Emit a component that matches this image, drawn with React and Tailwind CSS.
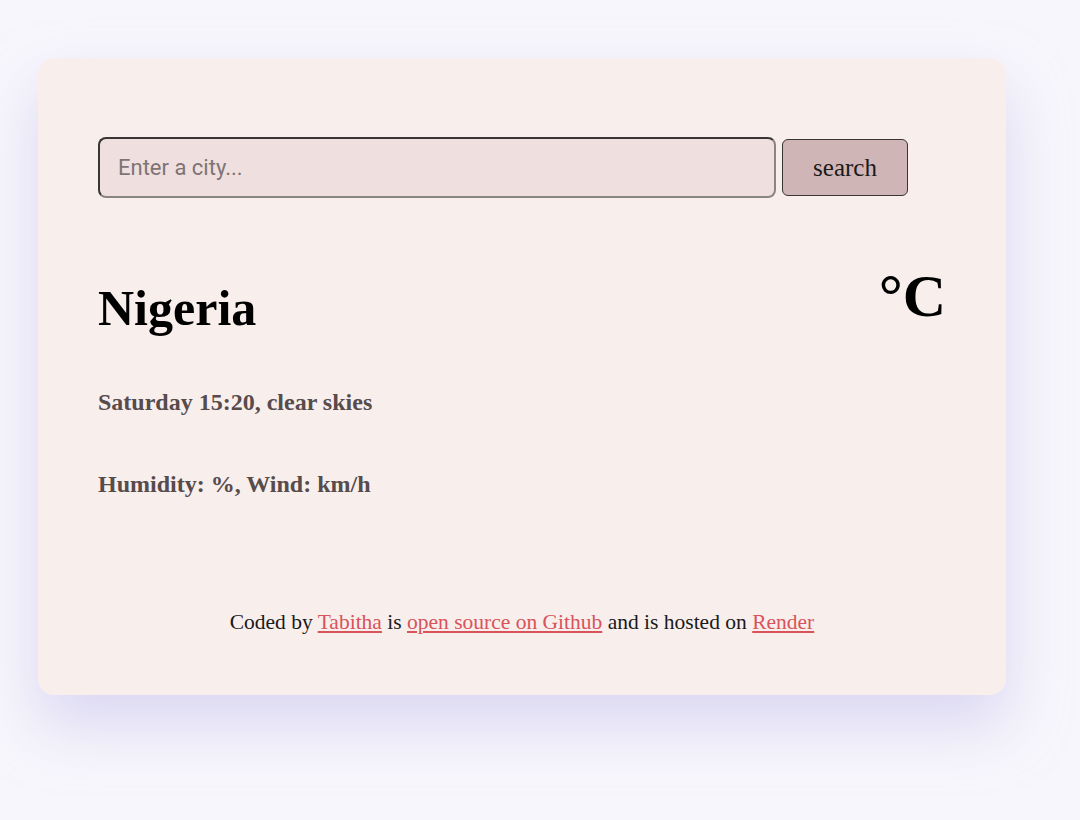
export default function App() {
  return (
    <div className="min-h-[820px] w-[1080px] bg-[#f7f6fc] pt-[58px] pl-[38px]" style={{ fontFamily: '"Liberation Serif", serif' }}>
      <div className="w-[968px] h-[637px] rounded-[16px] bg-[#f8efed] shadow-[0_30px_60px_rgba(200,195,235,0.6)] px-[60px] pt-[79px]">
        <form className="flex items-center" onSubmit={(e) => e.preventDefault()}>
          <input
            type="text"
            placeholder="Enter a city..."
            className="w-[678px] h-[61px] rounded-[8px] border-2 border-[#3a3535] border-b-[#8a8585] border-r-[#8a8585] bg-[#efdfdf] px-[18px] text-[22px] text-[#333] placeholder:text-[#7d7474] outline-none"
            style={{ fontFamily: 'Roboto, sans-serif' }}
          />
          <button
            type="submit"
            className="ml-[6px] w-[126px] h-[57px] rounded-[6px] border border-[#3a3535] bg-[#cfb5b5] text-[25px] text-[#1a1a1a]"
          >
            search
          </button>
        </form>
        <div className="flex justify-between mt-[68px]">
          <h1 className="text-[50px] font-bold text-black leading-none mt-[17px]">Nigeria</h1>
          <div className="text-[60px] font-bold text-black leading-none">°C</div>
        </div>
        <p className="mt-[57px] text-[24px] font-bold text-[#574b4b] leading-none">Saturday 15:20, clear skies</p>
        <p className="mt-[58px] text-[24px] font-bold text-[#574b4b] leading-none">Humidity: %, Wind: km/h</p>
        <footer className="mt-[110px] text-center text-[21.5px] text-[#1a1a1a]">
          Coded by <a href="#" className="text-[#d9535a] underline">Tabitha</a> is{" "}
          <a href="#" className="text-[#d9535a] underline">open source on Github</a> and is hosted on{" "}
          <a href="#" className="text-[#d9535a] underline">Render</a>
        </footer>
      </div>
    </div>
  );
}
